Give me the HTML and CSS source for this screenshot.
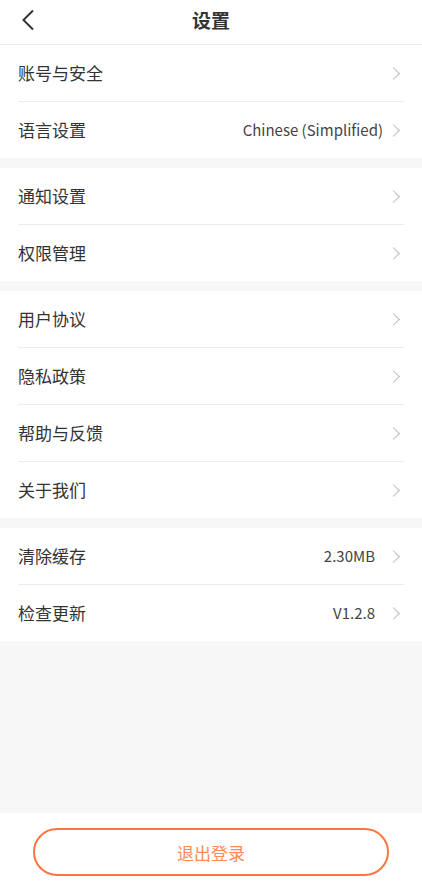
FILE: index.html
```html
<!DOCTYPE html>
<html lang="zh">
<head>
  <meta charset="UTF-8" />
  <title>设置</title>
  <meta name="viewport" content="width=device-width, initial-scale=1.0" />
  <link rel="stylesheet" href="styles.css">
</head>
<body>
  <div class="page">
    <div class="header">
      <span class="back">
        <svg width="14" height="22" viewBox="0 0 14 22"><path d="M12 1.5 L2.5 11 L12 20.5" fill="none" stroke="#333" stroke-width="2"/></svg>
      </span>
      <h1>设置</h1>
    </div>

    <div class="group">
      <div class="row"><span class="label">账号与安全</span><span class="arrow"></span></div>
      <div class="row"><span class="label">语言设置</span><span class="value">Chinese (Simplified)</span><span class="arrow"></span></div>
    </div>

    <div class="group">
      <div class="row"><span class="label">通知设置</span><span class="arrow"></span></div>
      <div class="row"><span class="label">权限管理</span><span class="arrow"></span></div>
    </div>

    <div class="group">
      <div class="row"><span class="label">用户协议</span><span class="arrow"></span></div>
      <div class="row"><span class="label">隐私政策</span><span class="arrow"></span></div>
      <div class="row"><span class="label">帮助与反馈</span><span class="arrow"></span></div>
      <div class="row"><span class="label">关于我们</span><span class="arrow"></span></div>
    </div>

    <div class="group">
      <div class="row"><span class="label">清除缓存</span><span class="value gap">2.30MB</span><span class="arrow"></span></div>
      <div class="row"><span class="label">检查更新</span><span class="value gap">V1.2.8</span><span class="arrow"></span></div>
    </div>

    <div class="spacer"></div>

    <div class="footer">
      <button class="logout">退出登录</button>
    </div>
  </div>
</body>
</html>
```

FILE: styles.css
```css
* {
  box-sizing: border-box;
}

body {
  margin: 0;
  font-family: "Noto Sans CJK SC", "Noto Sans", sans-serif;
  background: #f7f7f7;
  color: #333;
}

.page {
  display: flex;
  flex-direction: column;
  height: 887px;
}

.header {
  height: 45px;
  background: #fff;
  border-bottom: 1px solid #ececec;
  display: flex;
  align-items: center;
  justify-content: center;
  position: relative;
}

.back {
  position: absolute;
  left: 21px;
  top: 9px;
  height: 22px;
}

h1 {
  margin: 0;
  font-size: 19px;
  font-weight: 600;
  color: #333;
  line-height: 1;
  margin-top: -5px;
}

.group {
  background: #fff;
  padding: 0 18px;
  margin-bottom: 10px;
}

.row {
  height: 57px;
  display: flex;
  align-items: center;
  border-bottom: 1px solid #ececec;
}

.row:last-child {
  border-bottom: none;
  height: 56px;
}

.label {
  flex: 1;
  font-size: 17px;
  color: #333;
  margin-top: -2px;
}

.value {
  font-size: 15px;
  color: #444;
  margin-right: 6px;
  margin-top: -2px;
}

.value.gap {
  margin-right: 14px;
}

.arrow {
  width: 9px;
  height: 9px;
  border-top: 1.2px solid #bbb;
  border-right: 1.2px solid #bbb;
  transform: rotate(45deg);
  margin-right: 6px;
}

.spacer {
  flex: 1;
  margin-top: -10px;
}

.footer {
  background: #fff;
  height: 74px;
  padding-top: 15px;
  display: flex;
  justify-content: center;
  align-items: flex-start;
}

.logout {
  width: 356px;
  height: 48px;
  border: 2px solid #ff7440;
  border-radius: 24px;
  background: #fff;
  color: #ff8a55;
  font-family: "Noto Sans CJK SC", sans-serif;
  font-size: 17px;
}
```
